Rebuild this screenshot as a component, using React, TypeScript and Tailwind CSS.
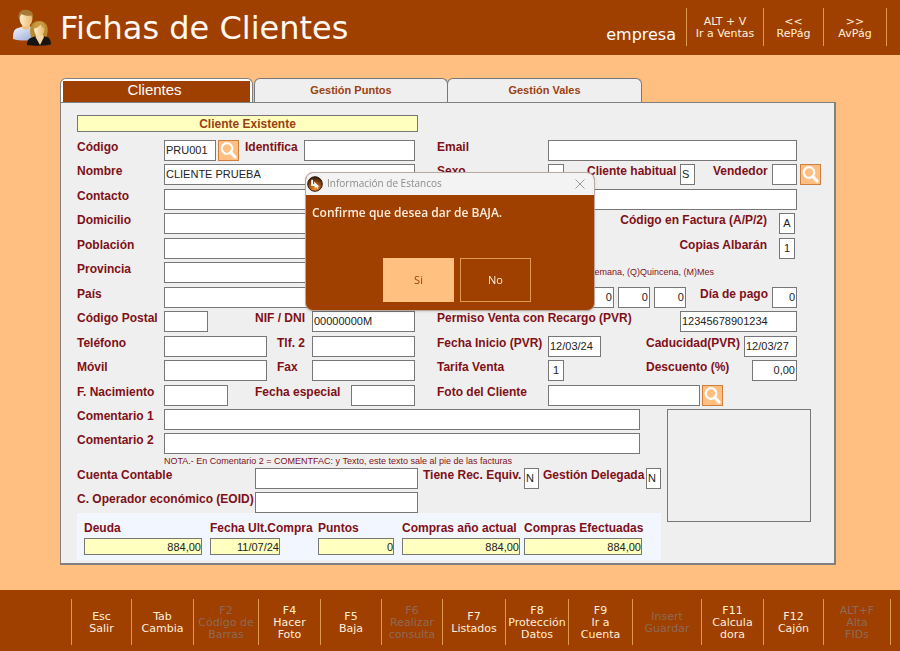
import type { InputHTMLAttributes, ReactNode } from "react";
import clsx from "clsx";

type Action = { text: string; disabled?: boolean };

const topActions: Action[] = [
  { text: "ALT + V\nIr a Ventas" },
  { text: "<<\nRePág" },
  { text: ">>\nAvPág" },
];

const bottomActions: Action[] = [
  { text: "Esc\nSalir" },
  { text: "Tab\nCambia" },
  { text: "F2\nCódigo de\nBarras", disabled: true },
  { text: "F4\nHacer\nFoto" },
  { text: "F5\nBaja" },
  { text: "F6\nRealizar\nconsulta", disabled: true },
  { text: "F7\nListados" },
  { text: "F8\nProtección\nDatos" },
  { text: "F9\nIr a\nCuenta" },
  { text: "Insert\nGuardar", disabled: true },
  { text: "F11\nCalcula\ndora" },
  { text: "F12\nCajón" },
  { text: "ALT+F\nAlta\nFIDs", disabled: true },
];

const totals = [
  { id: "deuda", label: "Deuda", value: "884,00", input: "w-[118px]" },
  { id: "ultima", label: "Fecha Ult.Compra", value: "11/07/24", input: "w-[70px]" },
  { id: "puntos", label: "Puntos", value: "0", input: "w-[76px]" },
  { id: "anual", label: "Compras año actual", value: "884,00", input: "w-[118px]" },
  { id: "efectuadas", label: "Compras Efectuadas", value: "884,00", input: "w-[118px]" },
];

function Row({ children, className }: { children?: ReactNode; className?: string }) {
  return <div className={clsx("flex min-w-0 items-start", className)}>{children}</div>;
}

function Label({ htmlFor, children, className }: { htmlFor: string; children: ReactNode; className?: string }) {
  return (
    <label htmlFor={htmlFor} className={clsx("shrink-0 whitespace-nowrap font-bold leading-[14px] text-[#7f1018]", className)}>
      {children}
    </label>
  );
}

function Box({ className, ...props }: InputHTMLAttributes<HTMLInputElement>) {
  return (
    <input
      type="text"
      className={clsx("h-[21px] min-w-0 border border-[#777] bg-white px-px pb-[2px] text-[11px] text-[#222] outline-none", className)}
      {...props}
    />
  );
}

function SearchButton({ label }: { label: string }) {
  return (
    <button type="button" aria-label={label} className="size-[21px] shrink-0 border border-[#cf8040] bg-[#ffbf80]">
      <svg viewBox="0 0 19 19" className="size-full" fill="none" stroke="#fff">
        <circle cx="8" cy="7.500" r="5.300" strokeWidth="2.200" />
        <path d="M11.800 11.500 16 16" strokeWidth="3.200" strokeLinecap="round" />
      </svg>
    </button>
  );
}

function ActionButton({ text, disabled }: Action) {
  return (
    <button
      type="button"
      disabled={disabled}
      className={clsx(
        "flex items-center justify-center whitespace-pre border-r border-[#e09a50] pt-[2px] text-center leading-3",
        disabled ? "text-[#8d6a58]" : "text-[#fff0dc]"
      )}
    >
      {text}
    </button>
  );
}

function PeopleIcon() {
  return (
    <svg viewBox="0 0 40 37" className="h-[37px] w-10">
      <defs>
        <linearGradient id="shirt" x1="0" y1="0" x2="1" y2="1">
          <stop offset="0" stopColor="#f4f6ff" />
          <stop offset="1" stopColor="#94a5cf" />
        </linearGradient>
        <linearGradient id="skin" x1="0" y1="0" x2="1" y2="0">
          <stop offset="0" stopColor="#fff0cc" />
          <stop offset="1" stopColor="#e9b66d" />
        </linearGradient>
      </defs>
      <path d="M1 30c0-7 1-10 5-11l5-1.500h7l4 2 3 10.500c-7 2-17 2-24 0z" fill="url(#shirt)" />
      <path d="M10 14h8v4.500c-2 3-6 3-8 0z" fill="#eec282" />
      <path d="M7.500 8c0-4 3-5.500 6.500-5.500S20.500 4 20.500 8c0 6-2.500 9.500-6.500 9.500S7.500 14 7.500 8z" fill="url(#skin)" />
      <path d="M6.800 10C5.500 4 8.500 .8 14 .8S22 4.500 20.800 10c-1-1.500-1-2.600-1.300-3.500-4 1-8-.2-10-1.500-1 1.500-1.500 3-2.700 5z" fill="#a87a35" />
      <path d="M19 28c-2-8-1-16 8-16s10 8 7.500 16z" fill="#b98a30" />
      <path d="M15 36c0-5 2-7 6-8l3-1h7l4 1c3 1 4 4 4 7.500-7 1.500-17 1.500-24 .5z" fill="#171414" />
      <path d="M24 25h6.500l1.500 3-4 8-4.500-8z" fill="#f5d5a5" />
      <path d="M22 19c0-3 1.500-5 5-5s5.500 2 5.500 5c0 5-2 8-5.300 8S22 24 22 19z" fill="url(#skin)" />
      <path d="M21 20c0-5 3-7.500 6.500-7.500S33.500 15 33 20c-2-1-3.500-2.500-4.500-4.500-1.500 2.500-4 3.500-7.500 4.500z" fill="#c79a40" />
    </svg>
  );
}

function ConfirmDialog() {
  return (
    <div className="fixed inset-x-0 top-[172px] flex justify-center">
      <div
        role="dialog"
        aria-labelledby="dialog-title"
        className="w-[290px] overflow-hidden rounded-lg border border-[#b9a9a0] bg-[#9f3f00] font-['Open_Sans','Noto_Sans',sans-serif] shadow-sm"
      >
        <div className="flex h-[22px] items-center bg-[#f3f3f3] px-px">
          <svg viewBox="0 0 16 16" className="size-4">
            <defs>
              <radialGradient id="ball" cx=".5" cy=".85" r=".8">
                <stop offset="0" stopColor="#f09030" />
                <stop offset=".5" stopColor="#a85512" />
                <stop offset="1" stopColor="#3a1a08" />
              </radialGradient>
            </defs>
            <circle cx="8" cy="8" r="7.300" fill="url(#ball)" stroke="#2e1608" />
            <path d="M4.200 3.800h1.800v4.400l1.200-.1V5.500l5.300 5.200-2.100.1.900 1.400-1.100.5-1-1.600-1.500 1V10H4.200z" fill="#fff" />
          </svg>
          <h2 id="dialog-title" className="ml-1 text-[10px] text-[#8b8b8b]">Información de Estancos</h2>
          <button type="button" aria-label="Cerrar" className="ml-auto mr-2 text-[#999]">
            <svg viewBox="0 0 10 10" className="size-[10px]" stroke="currentColor">
              <path d="M.5.5l9 9M9.500.5l-9 9" />
            </svg>
          </button>
        </div>
        <p className="px-[6px] pt-[9px] text-xs font-semibold leading-[18px] text-[#ffeedd]">Confirme que desea dar de BAJA.</p>
        <div className="flex justify-center gap-[6px] pb-2 pl-[14px] pt-9 text-[11px]">
          <button type="button" className="h-11 w-[71px] border border-[#ffc080] bg-[#ffc080] text-[#9f3f00]">Si</button>
          <button type="button" className="h-11 w-[71px] border border-[#e09a50] text-[#ffeedd]">No</button>
        </div>
      </div>
    </div>
  );
}

export default function App() {
  return (
    <div className="flex min-h-screen flex-col bg-[#ffbf80] font-['Liberation_Sans',Arial,sans-serif] text-xs">
      <header className="flex h-[55px] items-center bg-[#9f3f00] pl-3 pr-[13px] font-['DejaVu_Sans',Verdana,sans-serif] text-white">
        <PeopleIcon />
        <h1 className="ml-2 text-[32px] leading-9 text-[#fff8f0]">Fichas de Clientes</h1>
        <span className="ml-auto mr-[10px] pt-[15px] text-base">empresa</span>
        <nav className="mb-[2px] grid h-[38px] grid-cols-[77px_60px_63px] border-l border-[#e09a50] text-[11px]">
          {topActions.map((action) => (
            <ActionButton key={action.text} {...action} />
          ))}
        </nav>
      </header>

      <main className="pb-6 pl-[60px] pr-16 pt-[23px]">
        <div role="tablist" className="flex h-6 items-stretch text-[11px]">
          <button
            type="button"
            role="tab"
            aria-selected="true"
            className="mr-px w-[193px] rounded-t-md border border-b-0 border-[#808080] bg-white px-[2px] pt-[2px]"
          >
            <span className="flex h-[21px] items-center justify-center bg-[#9f3f00] pb-1 pr-1 text-[15px] text-white">Clientes</span>
          </button>
          <button type="button" role="tab" aria-selected="false" className="w-[194px] rounded-t-md border border-b-0 border-[#777] bg-[#efefef] font-bold text-[#9c4010]">
            Gestión Puntos
          </button>
          <button type="button" role="tab" aria-selected="false" className="-ml-px w-[195px] rounded-t-md border border-b-0 border-[#777] bg-[#efefef] font-bold text-[#9c4010]">
            Gestión Vales
          </button>
        </div>

        <form className="border border-b-2 border-r-2 border-[#808080] bg-[#efefef] pb-[3px] pl-4 pr-[13px] pt-3">
          <output className="flex h-[17px] w-[341px] items-center justify-center border border-[#777] bg-[#ffffc0] font-bold text-[#9c4010]">
            Cliente Existente
          </output>

          <div className="mt-2 grid grid-cols-[338fr_384fr] gap-x-[22px]">
            <div className="grid auto-rows-[24px_25px]">
              <Row>
                <Label htmlFor="codigo" className="w-[87px]">Código</Label>
                <Box id="codigo" defaultValue="PRU001" className="mr-[2px] w-[52px]" />
                <SearchButton label="Buscar código" />
                <Label htmlFor="identifica" className="ml-[6px] w-[59px]">Identifica</Label>
                <Box id="identifica" className="flex-1" />
              </Row>
              <Row>
                <Label htmlFor="nombre" className="w-[87px]">Nombre</Label>
                <Box id="nombre" defaultValue="CLIENTE PRUEBA" className="flex-1" />
              </Row>
              <Row>
                <Label htmlFor="contacto" className="w-[87px]">Contacto</Label>
                <Box id="contacto" className="flex-1" />
              </Row>
              <Row>
                <Label htmlFor="domicilio" className="w-[87px]">Domicilio</Label>
                <Box id="domicilio" className="flex-1" />
              </Row>
              <Row>
                <Label htmlFor="poblacion" className="w-[87px]">Población</Label>
                <Box id="poblacion" className="flex-1" />
              </Row>
              <Row>
                <Label htmlFor="provincia" className="w-[87px]">Provincia</Label>
                <Box id="provincia" className="flex-1" />
              </Row>
              <Row>
                <Label htmlFor="pais" className="w-[87px]">País</Label>
                <Box id="pais" className="flex-1" />
              </Row>
              <Row>
                <Label htmlFor="postal" className="w-[87px]">Código Postal</Label>
                <Box id="postal" className="w-11" />
                <Label htmlFor="nif" className="ml-auto w-[57px]">NIF / DNI</Label>
                <Box id="nif" defaultValue="00000000M" className="w-[103px]" />
              </Row>
              <Row>
                <Label htmlFor="telefono" className="w-[87px]">Teléfono</Label>
                <Box id="telefono" className="w-[103px]" />
                <Label htmlFor="telefono2" className="ml-auto w-[35px]">Tlf. 2</Label>
                <Box id="telefono2" className="w-[103px]" />
              </Row>
              <Row>
                <Label htmlFor="movil" className="w-[87px]">Móvil</Label>
                <Box id="movil" className="w-[103px]" />
                <Label htmlFor="fax" className="ml-auto w-[35px]">Fax</Label>
                <Box id="fax" className="w-[103px]" />
              </Row>
              <Row>
                <Label htmlFor="nacimiento" className="w-[87px]">F. Nacimiento</Label>
                <Box id="nacimiento" className="w-16" />
                <Label htmlFor="especial" className="ml-auto w-24">Fecha especial</Label>
                <Box id="especial" className="w-16" />
              </Row>
            </div>

            <div className="grid auto-rows-[24px_25px]">
              <Row className="pr-6">
                <Label htmlFor="email" className="w-[111px]">Email</Label>
                <Box id="email" type="email" className="flex-1" />
              </Row>
              <Row>
                <Label htmlFor="sexo" className="w-[111px]">Sexo</Label>
                <Box id="sexo" className="w-4" />
                <Label htmlFor="habitual" className="ml-auto w-[93px]">Cliente habitual</Label>
                <Box id="habitual" defaultValue="S" className="mr-[18px] w-[15px]" />
                <Label htmlFor="vendedor" className="w-[59px]">Vendedor</Label>
                <Box id="vendedor" className="mr-[3px] w-[25px]" />
                <SearchButton label="Buscar vendedor" />
              </Row>
              <Row className="pl-[111px] pr-6">
                <Box aria-label="Observaciones" className="flex-1" />
              </Row>
              <Row className="justify-end pr-[26px]">
                <Label htmlFor="factura" className="mr-3">Código en Factura (A/P/2)</Label>
                <Box id="factura" defaultValue="A" className="w-4 text-center" />
              </Row>
              <Row className="justify-end pr-[26px]">
                <Label htmlFor="copias" className="mr-3">Copias Albarán</Label>
                <Box id="copias" defaultValue="1" className="w-4 text-center" />
              </Row>
              <Row className="justify-end pr-[107px]">
                <span className="whitespace-nowrap text-[9px] leading-5 text-[#7f1018]">(S)Semana, (Q)Quincena, (M)Mes</span>
              </Row>
              <Row className="justify-end gap-1 pr-6">
                <Box aria-label="Plazo 1" defaultValue="0" className="w-8 text-right" />
                <Box aria-label="Plazo 2" defaultValue="0" className="w-8 text-right" />
                <Box aria-label="Plazo 3" defaultValue="0" className="mr-[10px] w-8 text-right" />
                <Label htmlFor="pago">Día de pago</Label>
                <Box id="pago" defaultValue="0" className="w-[25px] text-right" />
              </Row>
              <Row className="justify-between pr-6">
                <Label htmlFor="permiso">Permiso Venta con Recargo (PVR)</Label>
                <Box id="permiso" defaultValue="12345678901234" className="w-[117px]" />
              </Row>
              <Row className="pr-6">
                <Label htmlFor="inicio" className="w-[111px]">Fecha Inicio (PVR)</Label>
                <Box id="inicio" defaultValue="12/03/24" className="w-[53px]" />
                <Label htmlFor="caducidad" className="ml-auto w-[98px]">Caducidad(PVR)</Label>
                <Box id="caducidad" defaultValue="12/03/27" className="w-[53px]" />
              </Row>
              <Row className="pr-6">
                <Label htmlFor="tarifa" className="w-[111px]">Tarifa Venta</Label>
                <Box id="tarifa" defaultValue="1" className="w-4 text-center" />
                <Label htmlFor="descuento" className="ml-auto w-[106px]">Descuento (%)</Label>
                <Box id="descuento" defaultValue="0,00" className="w-[45px] text-right" />
              </Row>
              <Row>
                <Label htmlFor="foto" className="w-[111px]">Foto del Cliente</Label>
                <Box id="foto" className="mr-[2px] w-[152px]" />
                <SearchButton label="Buscar foto" />
              </Row>
            </div>
          </div>

          <div className="flex items-start">
            <div className="min-w-0 flex-1">
              <div className="grid auto-rows-[24px_21px] pr-[21px]">
                <Row>
                  <Label htmlFor="comentario1" className="w-[87px]">Comentario 1</Label>
                  <Box id="comentario1" className="flex-1" />
                </Row>
                <Row>
                  <Label htmlFor="comentario2" className="w-[87px]">Comentario 2</Label>
                  <Box id="comentario2" className="flex-1" />
                </Row>
              </div>
              <p className="pl-[87px] text-[9px] leading-[14px] text-[#7f1018]">
                NOTA.- En Comentario 2 = COMENTFAC: y Texto, este texto sale al pie de las facturas
              </p>
              <div className="grid auto-rows-[24px_21px]">
                <Row>
                  <Label htmlFor="cuenta" className="w-[178px]">Cuenta Contable</Label>
                  <Box id="cuenta" className="w-[163px]" />
                  <Label htmlFor="equivalencia" className="ml-auto w-[101px]">Tiene Rec. Equiv.</Label>
                  <Box id="equivalencia" defaultValue="N" className="mr-1 w-[15px]" />
                  <Label htmlFor="delegada" className="w-[103px]">Gestión Delegada</Label>
                  <Box id="delegada" defaultValue="N" className="w-[15px]" />
                </Row>
                <Row>
                  <Label htmlFor="eoid" className="w-[178px]">C. Operador económico (EOID)</Label>
                  <Box id="eoid" className="w-[163px]" />
                </Row>
              </div>
              <div className="grid h-[47px] grid-cols-[126px_108px_84px_122px_auto] bg-[#f1f6ff] pl-[7px] pt-[8px]">
                {totals.map((total) => (
                  <div key={total.id} className="flex flex-col gap-[3px]">
                    <Label htmlFor={total.id}>{total.label}</Label>
                    <input
                      id={total.id}
                      readOnly
                      value={total.value}
                      className={clsx("h-[17px] border border-[#777] bg-[#ffffc0] text-right text-[11px] text-[#222] outline-none", total.input)}
                    />
                  </div>
                ))}
              </div>
            </div>
            <div className="ml-[6px] mr-[10px] h-[113px] w-[144px] shrink-0 border border-[#777]" />
          </div>
        </form>
      </main>

      <footer className="mt-auto flex h-[61px] bg-[#9f3f00] pb-[6px] pl-[71px] pr-[9px] pt-[9px] font-['DejaVu_Sans',Verdana,sans-serif] text-[11px]">
        <nav className="grid flex-1 grid-cols-[60fr_62fr_65fr_62fr_61fr_61fr_63fr_63fr_64fr_69fr_62fr_60fr_67fr] border-l border-[#e09a50]">
          {bottomActions.map((action) => (
            <ActionButton key={action.text} {...action} />
          ))}
        </nav>
      </footer>

      <ConfirmDialog />
    </div>
  );
}
